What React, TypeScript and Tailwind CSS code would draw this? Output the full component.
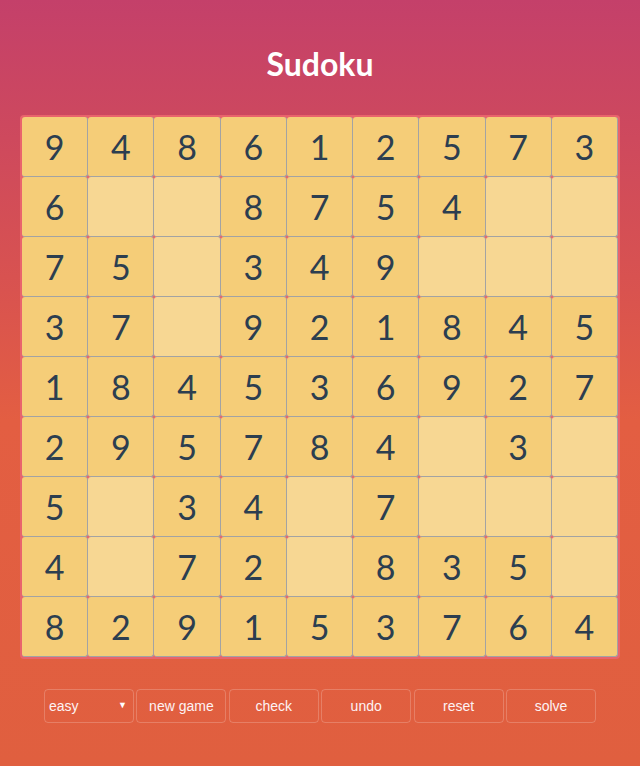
const board = [
  "948612573",
  "6..8754..",
  "75.349...",
  "37.921845",
  "184536927",
  "295784.3.",
  "5.34.7...",
  "4.72.835.",
  "829153764",
];

const buttons = ["new game", "check", "undo", "reset", "solve"];

export default function App() {
  return (
    <div className="min-h-[766px] w-full bg-[linear-gradient(180deg,#c4406a_0%,#d9534f_38%,#e35e42_55%,#e05f3f_100%)] pt-[44px] pb-[43px]">
      <h1
        className="text-center text-[32px] leading-[40px] font-bold text-white"
        style={{ fontFamily: "Lato, sans-serif" }}
      >
        Sudoku
      </h1>

      {/* Board */}
      <div className="mx-auto mt-[31px] w-[600px] rounded-[4px] bg-[#e9646c] p-[2px]">
        <div className="grid grid-cols-9">
          {board.flatMap((row, r) =>
            row.split("").map((ch, c) => (
              <div
                key={`${r}-${c}`}
                className={`flex h-[60px] items-center justify-center rounded-[3px] border-r border-b border-[#a3a3a3] text-[34px] text-[#2c3e50] ${
                  ch === "." ? "bg-[#f7d793]" : "bg-[#f5cd78]"
                }`}
                style={{ fontFamily: "Lato, sans-serif" }}
              >
                {ch === "." ? "" : ch}
              </div>
            ))
          )}
        </div>
      </div>

      {/* Controls */}
      <div
        className="mt-[30px] flex justify-center gap-[2.4px] text-[14px] text-[#fdf2f4]"
        style={{ fontFamily: "'Liberation Sans', Arial, sans-serif" }}
      >
        <div className="relative flex h-[34px] w-[90px] items-center rounded-[4px] border border-white/20 pt-[1px] pl-[4px]">
          easy
          <span className="absolute right-[6px] top-[11px] text-[9px] leading-none text-white">
            ▼
          </span>
        </div>
        {buttons.map((b) => (
          <div
            key={b}
            className="flex h-[34px] w-[90px] items-center justify-center rounded-[4px] border border-white/20 pt-[1px]"
          >
            {b}
          </div>
        ))}
      </div>
    </div>
  );
}
